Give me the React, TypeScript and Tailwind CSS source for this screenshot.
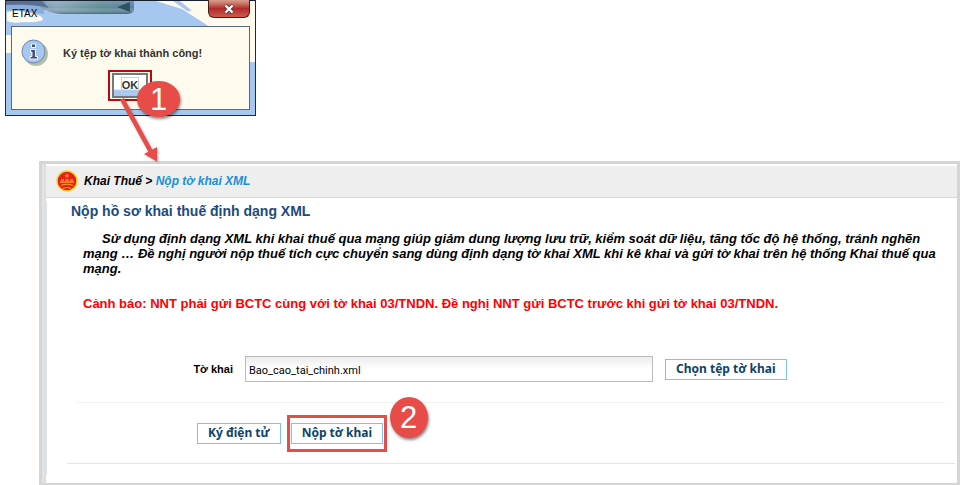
import { useState } from 'react';
import type { ReactNode } from 'react';

export default function App() {
  return (
    <main className="flow-root min-h-[485px] bg-white font-['Liberation_Sans',sans-serif] text-black">
      <SignedDialog />
      <FilingPanel />
    </main>
  );
}

function SignedDialog() {
  return (
    <section
      role="dialog"
      aria-label="ETAX"
      className="relative ml-[5px] w-[251px] border-x border-b border-[#1c2a3c] bg-[#a6c8f0] px-[5px] pb-[5px]"
    >
      <TitleBarArt />
      <header className="relative flex h-[26px] items-start justify-between">
        <h1 className="pt-2 pl-px text-[10px] leading-3">ETAX</h1>
        <button
          aria-label="Close"
          className="flex h-[18px] w-[42px] items-center justify-center rounded-b-md border border-t-0 border-[#4a1c1c] bg-linear-to-b from-[#d9a08f] via-[#b02a2c] via-50% to-[#cc5a4c]"
        >
          <svg viewBox="0 0 12 10" className="h-2.5 w-3">
            <path d="M2.5 1.5l7 7M9.5 1.5l-7 7" stroke="#4f3a40" strokeWidth="4" />
            <path d="M2.5 1.5l7 7M9.5 1.5l-7 7" stroke="#fff" strokeWidth="2.4" />
          </svg>
        </button>
      </header>
      <div className="relative border border-[#5a6a7c] bg-[#fffaee] pt-2 pb-2">
        <div className="flex h-[35px] items-center gap-[14px] pl-[9px]">
          <InfoIcon />
          <p className="text-[11px] leading-4 font-bold text-[#333]">Ký tệp tờ khai thành công!</p>
        </div>
        <div className="relative ml-24 w-11 border-2 border-[#b80a0a] px-0.5 py-px">
          <button className="flex h-[25px] w-9 items-center justify-center border-2 border-[#777] bg-linear-to-b from-white from-65% to-[#a6c8f0] to-75% text-[11px] font-bold text-[#333]">
            <span className="border border-[#b9d3dc] leading-[15px]">OK</span>
          </button>
          <svg
            viewBox="0 0 50 70"
            className="pointer-events-none absolute top-[22px] left-[4px] z-20 h-[70px] w-[50px] drop-shadow-[1px_1px_1px_#0005]"
          >
            <path d="M8 5L37 58" stroke="#e84c48" strokeWidth="4.6" />
            <path d="M30 60L43 53L43 67.5Z" fill="#e84c48" />
          </svg>
          <StepBadge className="top-[9px] left-[27px] h-9 w-[43px]">1</StepBadge>
        </div>
      </div>
    </section>
  );
}

function TitleBarArt() {
  return (
    <svg
      viewBox="0 0 249 115"
      preserveAspectRatio="none"
      className="absolute inset-0 size-full"
      aria-hidden="true"
    >
      <defs>
        <linearGradient id="blob">
          <stop offset="0" stopColor="#6b83ae" />
          <stop offset=".4" stopColor="#86a6b8" />
          <stop offset=".75" stopColor="#5f8e94" />
          <stop offset="1" stopColor="#5c7fa8" />
        </linearGradient>
        <linearGradient id="blobShade" x1="0" y1="0" x2="0" y2="1">
          <stop offset="0" stopColor="#fff" stopOpacity=".15" />
          <stop offset=".5" stopColor="#fff" stopOpacity="0" />
          <stop offset="1" stopColor="#2f5260" stopOpacity=".6" />
        </linearGradient>
      </defs>
      <path d="M150 1H249V62H244V27H204L176 9Z" fill="#fffaee" />
      <path d="M167 1L174 1L186 11L181 11Z" fill="#a6c8f0" />
      <path d="M0 2H38V14Q20 12 0 10Z" fill="#8cadd8" />
      <path d="M0 1H128V10Q127 14 120 14H56Q42 13 33 6L0 4Z" fill="url(#blob)" />
      <path d="M40 1H128V10Q127 14 120 14H56Q46 13 40 10Z" fill="url(#blobShade)" />
      <path d="M0 1H36L43 8Q25 3 0 5Z" fill="#5a6f94" />
      <path d="M111 7L124 2V12Z" fill="#2c5560" />
      <path d="M1 12Q15 9 29 14Q37 16 37 20Q30 23 18 22Q8 24 1 21Z" fill="#fffaee" />
      <path d="M0 35H5V53H0Z" fill="#fffaee" />
      <path d="M0 .5H249" stroke="#15202e" />
    </svg>
  );
}

function InfoIcon() {
  return (
    <svg viewBox="0 0 28 28" className="size-7 shrink-0" aria-hidden="true">
      <circle cx="15" cy="15" r="12" fill="#b3c0a6" />
      <circle cx="12.5" cy="12.5" r="11.5" fill="#a6c8f0" stroke="#6d87a8" />
      <path
        d="M9.5 10.5h5v7h2V20H9v-2.5h2V13H9.500zM10.500 5h4v3.500h-4z"
        fill="#454f78"
        stroke="#fff"
        strokeWidth=".9"
      />
    </svg>
  );
}

function StepBadge({ className, children }: { className: string; children: ReactNode }) {
  return (
    <span
      className={`pointer-events-none absolute z-10 flex items-center justify-center rounded-[50%] bg-[#e84c48] text-[31px] leading-none text-white shadow-[1px_2px_3px_#0007] ${className}`}
    >
      {children}
    </span>
  );
}

function FilingPanel() {
  return (
    <section className="mt-[45px] ml-[39px] flex border-[3px] border-[#d5d5d5]">
      <div className="w-1 shrink-0 bg-linear-to-r from-[#e6e6e6] to-[#dcdcdc]" />
      <div className="min-w-0 flex-1 pt-0.5">
        <nav className="flex h-8 items-center gap-1.5 border-b border-[#d8d8d8] bg-[#eee] pb-0.5 pl-[10px] text-[12px] font-bold italic">
          <Emblem />
          <p>
            Khai Thuế &gt;{' '}
            <a href="#xml" className="text-[#1a8fd8]">
              Nộp tờ khai XML
            </a>
          </p>
        </nav>
        <div className="mt-[3px] border-l border-[#dbe8f4] pr-0.5 pb-[11px]">
          <h2 className="pb-1 pl-6 text-[14px] leading-5 font-bold text-[#1a4b7c]">
            Nộp hồ sơ khai thuế định dạng XML
          </h2>
          <div className="pt-1.5 pr-3 pl-9 text-[13px] leading-[15px] font-bold">
            <p className="indent-[19px] italic">
              Sử dụng định dạng XML khi khai thuế qua mạng giúp giảm dung lượng lưu trữ, kiểm soát
              dữ liệu, tăng tốc độ hệ thống, tránh nghẽn mạng … Đề nghị người nộp thuế tích cực
              chuyển sang dùng định dạng tờ khai XML khi kê khai và gửi tờ khai trên hệ thống Khai
              thuế qua mạng.
            </p>
            <p className="mt-5 text-[#f00]">
              Cảnh báo: NNT phải gửi BCTC cùng với tờ khai 03/TNDN. Đề nghị NNT gửi BCTC trước khi
              gửi tờ khai 03/TNDN.
            </p>
          </div>
          <FilingForm />
        </div>
        <div className="h-2" />
      </div>
    </section>
  );
}

function FilingForm() {
  const [fileName, setFileName] = useState('Bao_cao_tai_chinh.xml');

  return (
    <form className="mt-[45px] pl-5" onSubmit={(e) => e.preventDefault()}>
      <div className="mr-2.5 ml-2.5 flex items-center gap-3 border-b border-[#f0f0f0] pb-5">
        <label htmlFor="file" className="w-[156px] text-right text-[11px] font-bold">
          Tờ khai
        </label>
        <input
          id="file"
          value={fileName}
          onChange={(e) => setFileName(e.target.value)}
          className="h-[26px] max-w-[408px] min-w-0 flex-1 border border-[#bbb] bg-linear-to-b from-[#ececec] to-white to-50% px-[3px] pt-0.5 font-[Roboto,sans-serif] text-[11px]"
        />
        <FormButton>Chọn tệp tờ khai</FormButton>
      </div>
      <div className="flex items-center gap-1.5 border-b border-[#dbe8f4] pt-3 pb-[11px] pl-[130px]">
        <FormButton>Ký điện tử</FormButton>
        <div className="relative flex border-[3px] border-[#e84c48] px-px py-[5px]">
          <FormButton>Nộp tờ khai</FormButton>
          <StepBadge className="-top-[21px] left-[100px] h-[41px] w-[38px]">2</StepBadge>
        </div>
      </div>
    </form>
  );
}

function FormButton({ children }: { children: ReactNode }) {
  return (
    <button
      type="button"
      className="h-[21px] shrink-0 cursor-pointer border border-[#7cc0f8] bg-white px-2.5 pb-0.5 font-['Noto_Sans',sans-serif] text-[12px] leading-[17px] font-bold whitespace-nowrap text-[#0d436b]"
    >
      {children}
    </button>
  );
}

function Emblem() {
  return (
    <svg viewBox="0 0 22 22" className="size-[22px] shrink-0" aria-hidden="true">
      <circle cx="11" cy="11" r="10" fill="#e5201d" stroke="#f2d51c" strokeWidth="1.4" />
      <path d="M11 3l.8 1.7 1.8.2-1.3 1.2.3 1.8L11 7l-1.6.9.3-1.8-1.3-1.2 1.8-.2z" fill="#f8841c" />
      <path d="M4 12h14M5 10h3M9.5 10h3M14 10h3" stroke="#f79b1b" strokeWidth="1.3" />
      <path d="M5 15.5q6-2.5 12 0M7 18.5q4-2 8 0" fill="none" stroke="#f4a01c" strokeWidth="1.1" />
    </svg>
  );
}
